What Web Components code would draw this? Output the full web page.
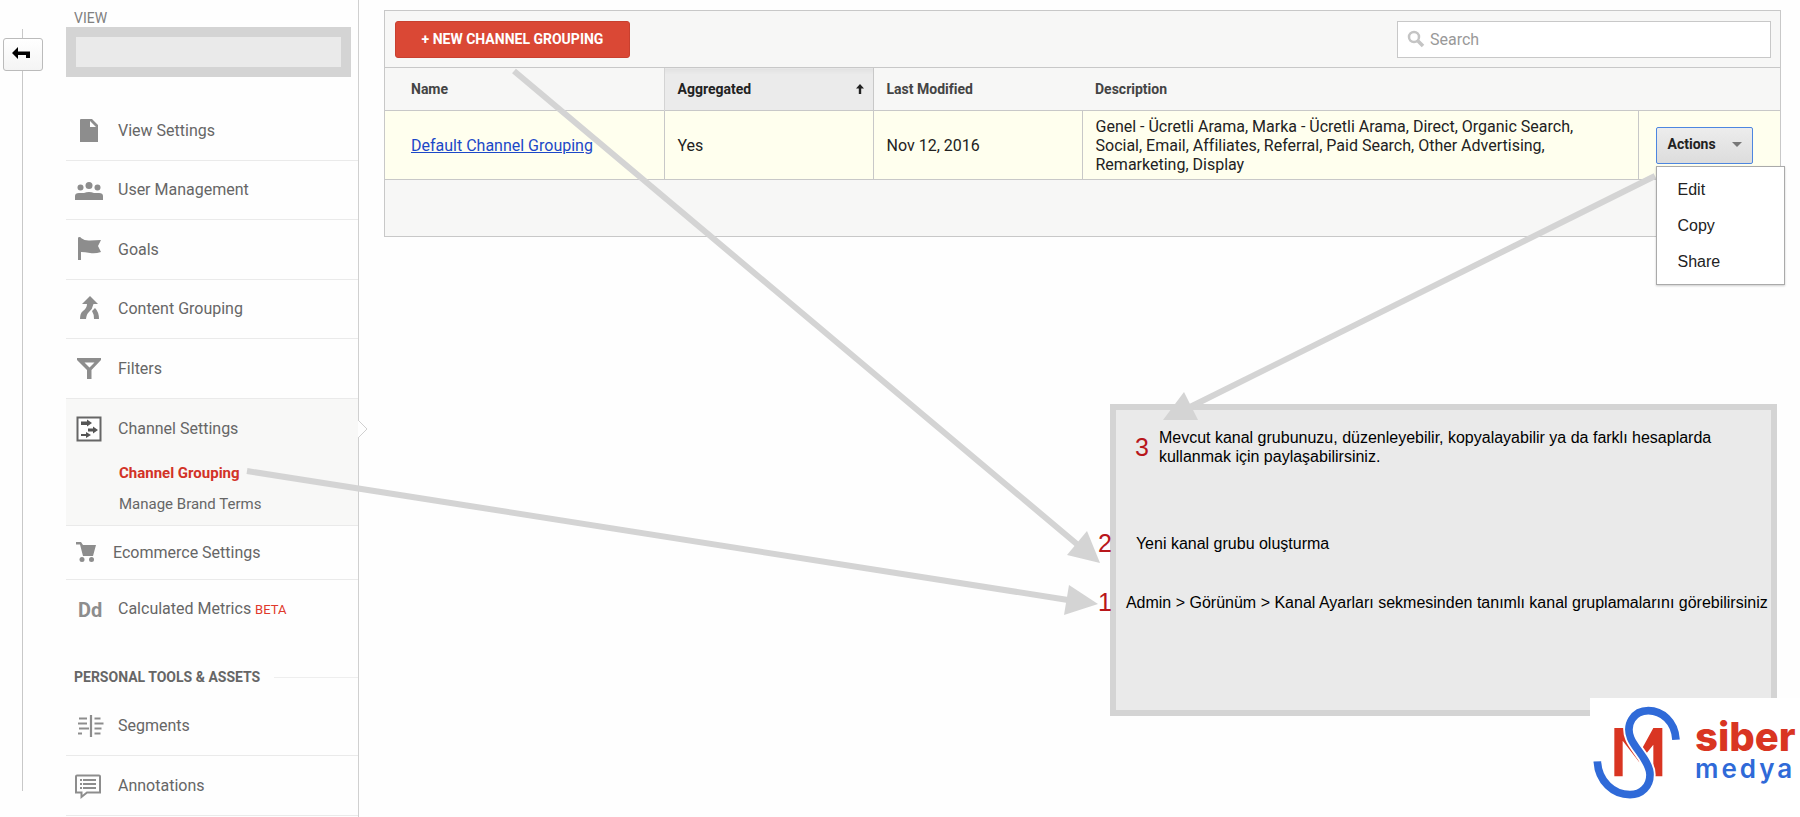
<!DOCTYPE html>
<html lang="tr">
<head>
<meta charset="utf-8">
<title>Channel Grouping</title>
<style>
body { margin: 0; background: #fefefe; font-family: Roboto, "Liberation Sans", sans-serif; color: #222; }
</style>
</head>
<body>
<ga-page></ga-page>
<script>
const define = (name, html, setup) => {
  const tpl = document.createElement('template');
  tpl.innerHTML = html;
  customElements.define(name, class extends HTMLElement {
    connectedCallback() {
      if (this.shadowRoot) return;
      const root = this.attachShadow({ mode: 'open' });
      root.append(tpl.content.cloneNode(true));
      if (setup) setup(this, root);
    }
  });
};

const ICONS = {
  file: '<path fill="#8d8d8d" fill-rule="evenodd" d="M6 2h11l6 6v17H5V3q0-1 1-1zM15 4v6h6z"/>',
  users: '<g fill="#8d8d8d"><circle cx="5.500" cy="11.500" r="3"/><circle cx="14" cy="9.500" r="3.500"/><circle cx="22.500" cy="11.500" r="3"/><path d="M0 24v-4q0-3 4-3h5q5-2 10 0h5q4 0 4 3v4z"/></g>',
  flag: '<path fill="#8d8d8d" d="M3 2q0-1 1.500-1T6 2q4 3 9 2.500T26 4l-3 6 3 6q-6 2-11 1t-9-1v8H3z"/>',
  merge: '<g fill="#8d8d8d"><path d="M15 1l8 8h-4.500q-1 5-4.500 8-2.500 2-3 7H5q0-6 3-8 4-3 4-7H7z"/><path d="M17 16l3-3q4 4 4 11h-5q0-5-2-8z"/></g>',
  filter: '<path fill="#8d8d8d" fill-rule="evenodd" d="M2 3h24v2l-9.500 10v9h-4.500v-9L2 5zm7.500 4.500l5 5 5-5z"/>',
  channel: '<path fill="#fff" stroke="#666" stroke-width="2" d="M2.500 2.500h23v23h-23z"/><path fill="#555" d="M6 6.500h6V4.500l5 3.500-5 3.500V10H6zM13 13.500h5V11.500l5 3.500-5 3.500v-2h-5zM6 19h5v-2l5 3-5 3v-2H6z"/>',
  cart: '<g fill="#8d8d8d"><path d="M1 3h5l2 3h13l-3 11H8L5 5.500H1z"/><circle cx="7" cy="20.500" r="2.500"/><circle cx="16.500" cy="20.500" r="2.500"/></g>',
  segments: '<path stroke="#8d8d8d" stroke-width="2.200" d="M4 6.500h8M3 11.500h9M4 16.500h10M3 21.500h4M19.500 6.500h6M19.500 11.500h9M19.500 16.500h7M19.500 21.500h6M16 3v22"/>',
  note: '<path fill="none" stroke="#8d8d8d" stroke-width="2" d="M2 3.500h22q1 0 1 1v16H12l-5.500 4.500v-4.500H1v-16q0-1 1-1z"/><path stroke="#8d8d8d" stroke-width="2" d="M5 8h2M8 8h13M5 12h2M8 12h13M5 16h2M8 16h13"/>'
};

define('ga-icon', `
<style>:host{display:block;flex:none;width:28px;height:28px} svg{display:block} b{display:block;font-size:20px;line-height:28px;padding-left:3px;color:#8d8d8d}</style>
<div></div>`, (el, root) => {
  const name = el.getAttribute('name');
  root.querySelector('div').innerHTML = name === 'dd' ? '<b>Dd</b>'
    : '<svg width="28" height="28" viewBox="0 0 28 28" overflow="visible" aria-hidden="true">' + ICONS[name] + '</svg>';
});

define('ga-nav-item', `
<style>
:host{display:block;border-bottom:1px solid #eaeaea;box-sizing:border-box}
:host([last]){border-bottom-color:transparent}
a{display:flex;align-items:center;gap:15px;height:100%;padding-left:9px;color:#666;font-size:16px;line-height:24px;text-decoration:none}
:host([tight]) a{gap:10px}
</style>
<a href="#"><span><slot></slot></span></a>`, (el, root) => {
  const icon = document.createElement('ga-icon');
  icon.setAttribute('name', el.getAttribute('icon'));
  root.querySelector('a').prepend(icon);
});

define('ga-rail', `
<style>
:host{display:block;padding:29px 0 27px 3px;box-sizing:border-box}
.line{height:100%;width:40px;padding-top:9px;box-sizing:border-box;background:linear-gradient(#c8c8c8,#c8c8c8) 19px 0/1px 100% no-repeat}
button{display:grid;place-items:center;width:40px;height:33px;padding:0 4px 2px 0;border:1px solid #bbb;border-radius:3px;background:linear-gradient(#fff,#f4f4f4)}
</style>
<div class="line"><button aria-label="Back"><svg width="18" height="13" viewBox="0 0 18 13"><path d="M0 6L6 0v4.500h12V11h-4V8H6v4z"/></svg></button></div>`);

define('ga-sidebar', `
<style>
:host{display:block;border-right:1px solid #d0d0d0;color:#666;padding-bottom:2px}
.label{padding:9px 0 0 8px;font-size:14px;line-height:18px;color:#808080}
.picker{height:30px;margin:0 7px 24px 0;border:10px solid #d4d4d4;background:#eaeaea}
nav{display:grid;grid-auto-rows:60px 59px}
nav.tools{grid-auto-rows:60px}
.open{position:relative;background:#f8f8f7;height:126px;border-bottom:1px solid #eaeaea}
.open ga-nav-item{height:59px;border:0}
.open svg{position:absolute;left:100%;top:20px}
.open a{display:block;margin-left:53px;font-size:15px;line-height:31px;color:#666;text-decoration:none}
.open a.on{color:#d23227;font-weight:700}
.shop{height:54px}.calc{height:60px}
small{font-size:13px;color:#e0392b}
h2{display:flex;align-items:center;gap:14px;margin:26px 0 8px 8px;font-size:14px;line-height:22px;font-weight:700;color:#666}
h2:after{content:"";flex:1;height:1px;background:#eee}
</style>
<div class="label">VIEW</div>
<div class="picker"></div>
<nav>
<ga-nav-item icon="file">View Settings</ga-nav-item>
<ga-nav-item icon="users">User Management</ga-nav-item>
<ga-nav-item icon="flag">Goals</ga-nav-item>
<ga-nav-item icon="merge">Content Grouping</ga-nav-item>
<ga-nav-item icon="filter">Filters</ga-nav-item>
</nav>
<div class="open">
<ga-nav-item icon="channel">Channel Settings</ga-nav-item>
<a class="on" href="#">Channel Grouping</a>
<a href="#">Manage Brand Terms</a>
<svg width="10" height="20" viewBox="0 0 10 20"><path fill="#fefefe" stroke="#d0d0d0" d="M0 1l9 9-9 9"/></svg>
</div>
<ga-nav-item class="shop" icon="cart" tight>Ecommerce Settings</ga-nav-item>
<ga-nav-item class="calc" icon="dd" last>Calculated Metrics <small>BETA</small></ga-nav-item>
<h2>PERSONAL TOOLS &amp; ASSETS</h2>
<nav class="tools">
<ga-nav-item icon="segments">Segments</ga-nav-item>
<ga-nav-item icon="note">Annotations</ga-nav-item>
</nav>`);

define('ga-actions', `
<style>
:host{display:block;position:relative;width:97px}
button{display:flex;align-items:center;justify-content:space-between;width:97px;height:37px;padding:0 10px 2px 11px;border:1px solid #4d86e0;border-radius:2px;background:linear-gradient(#ededed,#dcdcdc);font:700 14px Roboto,sans-serif;color:#222}
ul{position:absolute;z-index:1;left:0;top:39px;width:129px;margin:0;padding:5px 0 4px;box-sizing:border-box;border:1px solid #aaa;background:#fff;box-shadow:0 1px 2px #0003;list-style:none}
a{display:block;padding-left:21px;font:16px/36px "Liberation Sans",Arial,sans-serif;color:#222;text-decoration:none}
</style>
<button aria-haspopup="menu" aria-expanded="true">Actions <svg width="10" height="5" viewBox="0 0 10 5"><path fill="#777" d="M0 0h10L5 5z"/></svg></button>
<ul><li><a href="#">Edit</a></li><li><a href="#">Copy</a></li><li><a href="#">Share</a></li></ul>`);

define('ga-table', `
<style>
:host{display:block;border:1px solid #c8c8c8;background:#f7f7f6}
.bar{display:flex;justify-content:space-between;align-items:center;height:56px;padding:0 9px 0 10px}
.bar button{width:235px;height:37px;border:1px solid #c8402f;border-radius:3px;background:#da4835;color:#fff;font:700 14px Roboto,sans-serif}
label{display:flex;align-items:center;gap:5px;width:374px;height:37px;box-sizing:border-box;padding:0 9px;border:1px solid #c8c8c8;background:#fff}
input{flex:1;min-width:0;border:0;padding:0;outline:0;font:16px Roboto,sans-serif}
input::placeholder{color:#999}
table{width:100%;table-layout:fixed;border-collapse:collapse}
th{height:42px;padding:0 13px;border-top:1px solid #c8c8c8;text-align:left;font-size:14px;color:#444}
th.sort{background:linear-gradient(#e2e2e2,#ebebeb 6px);border-left:1px solid #d4d4d4;border-right:1px solid #c8c8c8;color:#222}
th div{display:flex;justify-content:space-between;align-items:center;margin-right:-4px}
td{height:68px;padding:0 13px;border:1px solid #c8c8c8;background:#ffffee;font-size:16px;line-height:19px}
td:first-child,th:first-child{padding-left:26px}
td:first-child{border-left:0} td:last-child{border-right:0;padding-left:17px}
td.desc{padding-right:40px}
a{color:#1c48c8}
.foot{height:56px}
</style>
<div class="bar"><button>+ NEW CHANNEL GROUPING</button>
<label><svg width="18" height="18" viewBox="0 0 18 18" fill="none" stroke="#c4c4c4"><circle cx="7" cy="7" r="5" stroke-width="2.500"/><path stroke-width="3.500" d="M11 11l5 5"/></svg><input type="search" placeholder="Search" aria-label="Search"></label></div>
<table>
<colgroup><col style="width:279px"><col style="width:209px"><col style="width:209px"><col><col style="width:142px"></colgroup>
<thead><tr><th>Name</th><th class="sort"><div>Aggregated <svg width="8" height="10" viewBox="0 0 8 10"><path fill="#222" d="M4 0l4 4.500H5.200V10H2.800V4.500H0z"/></svg></div></th><th>Last Modified</th><th>Description</th><th></th></tr></thead>
<tbody><tr><td><a href="#">Default Channel Grouping</a></td><td>Yes</td><td>Nov 12, 2016</td><td class="desc">Genel - Ücretli Arama, Marka - Ücretli Arama, Direct, Organic Search, Social, Email, Affiliates, Referral, Paid Search, Other Advertising, Remarketing, Display</td><td><ga-actions></ga-actions></td></tr></tbody>
</table>
<div class="foot"></div>`);

define('ga-notes', `
<style>
:host{display:block;box-sizing:border-box;width:667px;height:312px;border:6px solid #d4d4d4;background:#eaeaea;color:#000;font:16px/19px "Liberation Sans",Arial,sans-serif}
p{display:flex;align-items:center;margin:0}
b{flex:none;font-size:25px;line-height:28px;font-weight:400;color:#b8161b}
.c{padding:18px 40px 0 19px;gap:10px}
.b{margin:63px 0 0 -18px;gap:24px}
.a{margin:31px 0 0 -18px;gap:14px;white-space:nowrap}
</style>
<p class="c"><b>3</b><span>Mevcut kanal grubunuzu, düzenleyebilir, kopyalayabilir ya da farklı hesaplarda kullanmak için paylaşabilirsiniz.</span></p>
<p class="b"><b>2</b><span>Yeni kanal grubu oluşturma</span></p>
<p class="a"><b>1</b><span>Admin &gt; Görünüm &gt; Kanal Ayarları sekmesinden tanımlı kanal gruplamalarını görebilirsiniz</span></p>`);

define('ga-arrows', `
<style>:host{position:absolute;left:0;top:0;width:100%;height:817px;pointer-events:none} svg{display:block;width:100%;height:100%}</style>
<svg viewBox="0 0 1800 817" preserveAspectRatio="none" fill="#d4d4d4" stroke="#d4d4d4">
<g stroke-width="6" fill="none"><path d="M514 71L1078 545"/><path d="M247 471L1068 600"/><path d="M1655 176L1190 407"/></g>
<g stroke="none"><path d="M1100 563l-33-8 20-24z"/><path d="M1098 604l-34 11 5-30z"/><path d="M1163 420l21-28 14 28z"/></g></svg>`);

define('siber-logo', `
<style>
:host{position:absolute;right:0;bottom:0;display:flex;width:210px;height:120px;background:#fff}
svg{flex:none}
div{padding-top:18px;font-family:Inter,sans-serif}
b,span{display:block}
b{font-size:40px;line-height:42px;font-weight:800;color:#d93522}
span{font-size:26px;line-height:22px;font-weight:600;color:#2f6ad8;letter-spacing:3px}
</style>
<svg width="105" height="120" viewBox="570 920 315 360" aria-label="Siber Medya" fill="none">
<path fill="#d93522" d="M643 1010H670L716 1090L760 1010H787V1155H760V1060L718 1113L668 1048V1155H643Z"/>
<path stroke="#fff" stroke-width="34" d="M828 1045C825 990 785 958 745 958C700 958 676 1000 692 1040C704 1072 750 1110 750 1150C750 1185 725 1210 690 1210C640 1210 595 1170 592 1110"/>
<path stroke="#2f6ad8" stroke-width="23" d="M828 1045C825 990 785 958 745 958C700 958 676 1000 692 1040C704 1072 750 1110 750 1150C750 1185 725 1210 690 1210C640 1210 595 1170 592 1110"/>
</svg>
<div><b>siber</b><span>medya</span></div>`);

define('ga-page', `
<style>
:host{display:grid;grid-template-columns:66px 293px minmax(0,1fr);position:relative;min-height:100vh;box-sizing:border-box;overflow:hidden}
main{padding:10px 19px 0 25px}
ga-notes{margin:167px 4px 0 auto}
</style>
<ga-rail></ga-rail>
<ga-sidebar></ga-sidebar>
<main><ga-table></ga-table><ga-notes></ga-notes></main>
<ga-arrows></ga-arrows>
<siber-logo></siber-logo>`);
</script>
</body>
</html>
